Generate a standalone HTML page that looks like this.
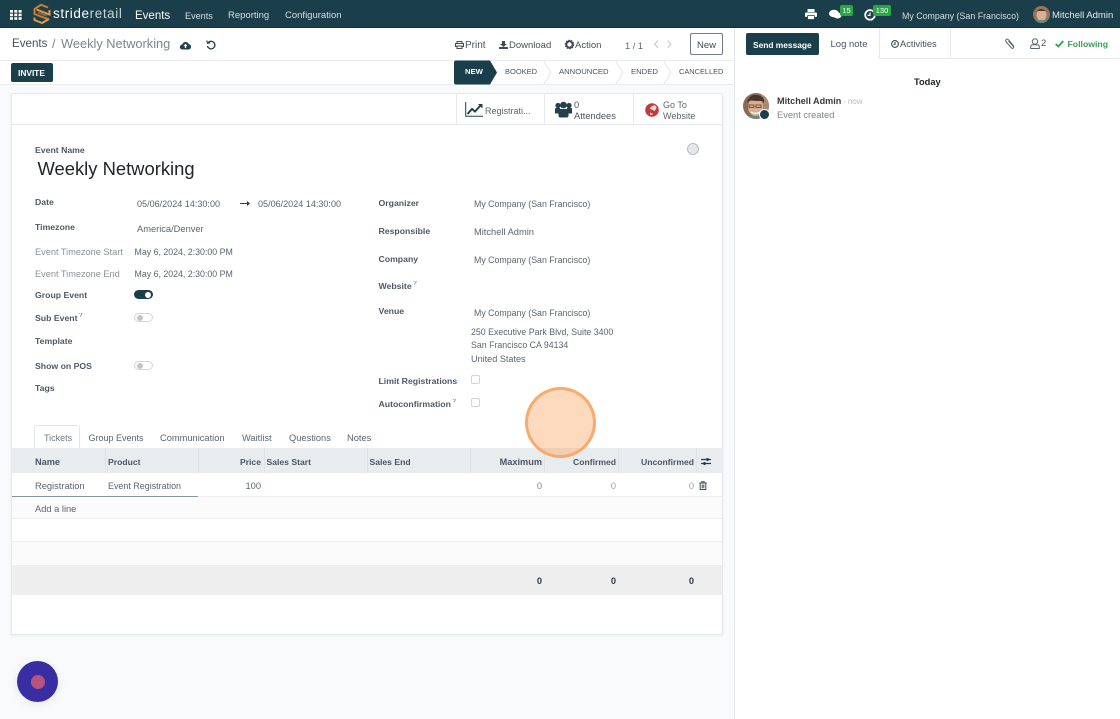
<!DOCTYPE html>
<html><head><meta charset="utf-8">
<style>
html,body{margin:0;padding:0;width:1120px;height:719px;overflow:hidden;background:#f9fafb;font-family:"Liberation Sans",sans-serif}
.a{position:absolute}
.t{position:absolute;white-space:nowrap;line-height:14px;font-size:9.6px;color:#4b5563}
.l{color:#374151;font-weight:bold;font-size:8.7px;opacity:.88}
.m{color:#8a9097;font-size:9.2px}
.v{color:#5b6570;font-size:8.8px}
.w{color:#fff}
.h{color:#374151;font-weight:bold;font-size:8.6px;opacity:.88}
.r{text-align:right}
sup{font-size:6px;color:#1b404c;line-height:0;font-weight:normal}
svg{position:absolute;overflow:visible}
.tog{position:absolute;left:134px;width:19px;height:9px;border-radius:5px;background:#fff;border:1px solid #d4d7da;box-sizing:border-box}
.tog i{position:absolute;left:2px;top:1px;width:6px;height:6px;border-radius:50%;background:#c4c6c9}
.cb{position:absolute;left:471px;width:9px;height:9px;border:1px solid #ced4da;border-radius:2px;background:#fff;box-sizing:border-box}
.vs{position:absolute;width:1px;background:#e0e3e6}
.hs{position:absolute;height:1px;background:#eceef0}
</style></head>
<body>
<!-- top bar -->
<div class="a" style="left:0;top:0;width:1120px;height:28px;background:#1a3f4b;border-bottom:1px solid #123039;box-sizing:border-box"></div>
<svg style="left:10px;top:10px" width="12" height="10" fill="#fff"><rect x="0" y="0" width="3" height="2.600"/><rect x="4.300" y="0" width="3" height="2.600"/><rect x="8.600" y="0" width="3" height="2.600"/><rect x="0" y="3.600" width="3" height="2.600"/><rect x="4.300" y="3.600" width="3" height="2.600"/><rect x="8.600" y="3.600" width="3" height="2.600"/><rect x="0" y="7.200" width="3" height="2.600"/><rect x="4.300" y="7.200" width="3" height="2.600"/><rect x="8.600" y="7.200" width="3" height="2.600"/></svg>
<svg style="left:33px;top:4px" width="18" height="20" fill="none" stroke="#d98a3d" stroke-width="2"><path d="M15 3.500 8 .8 1.500 5v5l13 5v-1.200" stroke="#c67f38"/><path d="M16.500 6v4.500L3.500 5.500M1.500 13.500v2.500L9 19l7-4" stroke="#e3994a"/><path d="M5 8.500l9 3.500" stroke="#8a6a40"/></svg>
<span class="t w" style="left:53px;top:6px;font-size:13.500px;line-height:16px;letter-spacing:.6px">stride<span style="font-weight:normal;color:#c9d3d6">retail</span></span>
<span class="t w" style="left:135px;top:8.500px;font-size:11.500px">Events</span>
<span class="t" style="left:185px;top:8.500px;color:#d7dfe1;font-size:9.100px">Events</span>
<span class="t" style="left:228px;top:8.500px;color:#d7dfe1;font-size:9.500px">Reporting</span>
<span class="t" style="left:285px;top:8.500px;color:#d7dfe1;font-size:9.500px">Configuration</span>
<svg style="left:805px;top:9px" width="12" height="11" fill="#fff"><rect x="2.500" y="0" width="7" height="3" rx=".5"/><rect x="0" y="3.500" width="12" height="4.500" rx="1"/><rect x="2.500" y="6.500" width="7" height="4" rx=".5" stroke="#1a3f4b" stroke-width=".8"/></svg>
<svg style="left:829px;top:9px" width="13" height="11" fill="#fff"><ellipse cx="5" cy="4.500" rx="5" ry="3.800"/><ellipse cx="8.500" cy="6.500" rx="4" ry="3"/></svg>
<div class="a" style="left:840px;top:5px;width:13px;height:11px;background:#28a745;border-radius:2px"></div>
<span class="t w" style="left:840px;top:3.500px;width:13px;text-align:center;font-size:7.500px">15</span>
<svg style="left:864px;top:9px" width="12" height="12" fill="none" stroke="#fff" stroke-width="1.800"><path d="M9.800 3A4.800 4.800 0 1 0 10.800 6"/><path d="M6 3.500V6.300H3.500" stroke-width="1.200"/></svg>
<div class="a" style="left:873px;top:5px;width:18px;height:11px;background:#28a745;border-radius:2px"></div>
<span class="t w" style="left:873px;top:3.500px;width:18px;text-align:center;font-size:7.500px">130</span>
<span class="t" style="left:902px;top:8.500px;color:#d7dfe1;font-size:8.850px">My Company (San Francisco)</span>
<svg style="left:1033px;top:6px" width="17" height="17"><defs><clipPath id="c1"><circle cx="8.500" cy="8.500" r="8.500"/></clipPath></defs><g clip-path="url(#c1)"><rect width="17" height="17" fill="#9a7459"/><ellipse cx="8.500" cy="9" rx="5" ry="6" fill="#d9b095"/><path d="M3 6Q8 0 14 6L12 5H5z" fill="#4a3528"/><rect x="3" y="14" width="11" height="4" fill="#6b8a7c"/></g></svg>
<span class="t" style="left:1052px;top:8.500px;color:#e5eaec;font-size:9.500px">Mitchell Admin</span>

<!-- control panel -->
<div class="a" style="left:0;top:28px;width:734px;height:56px;background:#fff"></div>
<div class="a" style="left:0;top:60px;width:734px;height:1px;background:#e9ecef"></div>
<div class="a" style="left:0;top:84px;width:734px;height:1px;background:#e9ecef"></div>
<span class="t" style="left:12px;top:36px;font-size:11.600px;line-height:16px;color:#495057">Events</span>
<span class="t" style="left:52px;top:36px;font-size:12.200px;line-height:16px;color:#7d858d">/</span>
<span class="t" style="left:61px;top:36px;font-size:12.800px;line-height:16px;color:#7d858d">Weekly Networking</span>
<svg style="left:180px;top:41px" width="11" height="9" fill="#23404b"><path d="M2.500 8.500a2.500 2.500 0 0 1-.3-5A3.500 3.500 0 0 1 8.700 3a2.800 2.800 0 0 1 0 5.500z"/><path d="M5.500 2.800 7.500 5H6.200v2H4.800V5H3.500z" fill="#fff"/></svg>
<svg style="left:206px;top:40px" width="10" height="10" fill="none" stroke="#23404b" stroke-width="1.300"><path d="M2 2.800A3.800 3.800 0 1 1 1.400 6"/><path d="M.8 .5 1.500 3.200 4.200 2.800" stroke-width="1.100"/></svg>

<svg style="left:455px;top:41px" width="9" height="8" fill="none" stroke="#3f4a55" stroke-width="1"><rect x="2" y=".5" width="5" height="2"/><rect x=".5" y="2.500" width="8" height="3"/><rect x="2" y="5" width="5" height="2.500" fill="#fff"/></svg>
<span class="t" style="left:465px;top:38.500px;color:#495057;font-size:10px">Print</span>
<svg style="left:499px;top:41px" width="9" height="8" fill="#3f4a55"><path d="M3 0h3v3h2L4.500 6 1 3h2z"/><rect x="0" y="6" width="9" height="2" rx=".5"/></svg>
<span class="t" style="left:509px;top:38.500px;color:#495057;font-size:9.500px">Download</span>
<svg style="left:565px;top:40px" width="9" height="9"><circle cx="4.500" cy="4.500" r="3.200" fill="none" stroke="#3f4a55" stroke-width="2"/><circle cx="4.500" cy="4.500" r="4.300" fill="none" stroke="#3f4a55" stroke-width="1" stroke-dasharray="1.500 1.200"/></svg>
<span class="t" style="left:575px;top:38.500px;color:#495057;font-size:9.500px">Action</span>
<span class="t" style="left:625px;top:38.500px;color:#5b6570;font-size:9.300px">1 / 1</span>
<svg style="left:652px;top:40px" width="24" height="9" fill="none" stroke="#d0d4d8" stroke-width="1.400"><path d="M6 .8 2.500 4.300 6 7.800M15.500 .8l3.500 3.500-3.500 3.500"/></svg>
<div class="a" style="left:690px;top:33px;width:33px;height:22px;border:1px solid #6f7f86;border-radius:2px;background:#fff;box-sizing:border-box"></div>
<span class="t" style="left:697px;top:38.500px;color:#3f4a55;font-size:9.500px">New</span>

<div class="a" style="left:11px;top:63px;width:42px;height:19px;background:#1a3f4b;border-radius:2px"></div>
<span class="t w" style="left:18px;top:66px;font-weight:bold;font-size:8.400px">INVITE</span>

<!-- status -->
<svg style="left:454px;top:60px" width="270" height="25" fill="none" stroke="#e3e6e8"><path d="M2 .5H36L43 12.500 36 24.500H2Q0 24.500 0 22.500V2.500Q0 .5 2 .5Z" fill="#1a3f4b" stroke="none"/><path d="M90 1 97 12.500 90 24M162 1 169 12.500 162 24M210 1 217 12.500 210 24"/></svg>
<span class="t w" style="left:465px;top:65px;font-weight:bold;font-size:7.700px">NEW</span>
<span class="t" style="left:505px;top:65px;font-size:7.500px;color:#4b5563">BOOKED</span>
<span class="t" style="left:559px;top:65px;font-size:7.700px;color:#4b5563">ANNOUNCED</span>
<span class="t" style="left:631px;top:65px;font-size:7.700px;color:#4b5563">ENDED</span>
<span class="t" style="left:679px;top:65px;font-size:7.400px;color:#4b5563">CANCELLED</span>

<!-- sheet -->
<div class="a" style="left:11px;top:93px;width:712px;height:542px;background:#fff;border:1px solid #e6e8ea;box-sizing:border-box;box-shadow:0 1px 3px rgba(0,0,0,.05)"></div>
<div class="hs" style="left:12px;top:124px;width:710px;background:#e6e8ea"></div>
<div class="vs" style="left:456px;top:94px;height:30px;background:#e6e8ea"></div>
<div class="vs" style="left:544px;top:94px;height:30px;background:#e6e8ea"></div>
<div class="vs" style="left:633px;top:94px;height:30px;background:#e6e8ea"></div>
<svg style="left:465px;top:102px" width="18" height="15" fill="none" stroke="#23404b"><path d="M.7 0V14.300H18" stroke-width="1"/><path d="M2.500 12 7 7l3 2.500L16 3" stroke-width="2"/><path d="M13 2h4.500v4.500z" fill="#23404b" stroke="none"/></svg>
<span class="t v" style="left:485px;top:103.500px;font-size:9px">Registrati...</span>
<svg style="left:555px;top:101px" width="17" height="17" fill="#23404b"><circle cx="3" cy="4.500" r="2.600"/><circle cx="14" cy="4.500" r="2.600"/><circle cx="8.500" cy="4" r="3.300"/><path d="M0 8q0-1 1-1h4v5.500H0zM12 7h4q1 0 1 1v4.500h-5z"/><path d="M3.500 8h10v6.500q0 2-2 2h-6q-2 0-2-2z"/></svg>
<span class="t" style="left:574px;top:97.500px;font-size:9.300px;color:#4b5563">0</span>
<span class="t" style="left:574px;top:109px;font-size:9.300px;color:#4b5563">Attendees</span>
<svg style="left:645px;top:103px" width="14" height="14"><circle cx="7" cy="7" r="6.800" fill="#c43a3a"/><path d="M7.500 3Q10 1 11.500 4 11.500 6 9.500 8 7.500 6.500 5 6 5.500 3.500 7.500 3zM5 9.500q2 .5 3 2-2 1-3-.2z" fill="#f5d8d8"/></svg>
<span class="t v" style="left:663px;top:97.500px;font-size:9px">Go To</span>
<span class="t v" style="left:663px;top:109px;font-size:9px">Website</span>

<!-- form -->
<span class="t l" style="left:35px;top:143px">Event Name</span>
<span class="t" style="left:37.500px;top:158px;font-size:18.400px;line-height:22px;color:#212529">Weekly Networking</span>
<div class="a" style="left:687px;top:143px;width:12px;height:12px;background:#e4e7ea;border:1px solid #b8bdc2;border-radius:50%;box-sizing:border-box"></div>

<span class="t l" style="left:35px;top:195px">Date</span>
<span class="t v" style="left:137px;top:197px;font-size:9.050px">05/06/2024 14:30:00</span>
<svg style="left:240px;top:200px" width="10" height="7" fill="#23404b"><path d="M0 3h7V1l3 2.500L7 6V4H0z"/></svg>
<span class="t v" style="left:258px;top:197px;font-size:9.050px">05/06/2024 14:30:00</span>
<span class="t l" style="left:35px;top:220px">Timezone</span>
<span class="t v" style="left:137px;top:222px;font-size:9.300px">America/Denver</span>
<span class="t m" style="left:35px;top:245px">Event Timezone Start</span>
<span class="t v" style="left:134.500px;top:245px">May 6, 2024, 2:30:00 PM</span>
<span class="t m" style="left:35px;top:267px">Event Timezone End</span>
<span class="t v" style="left:134.500px;top:267px">May 6, 2024, 2:30:00 PM</span>
<span class="t l" style="left:35px;top:288px">Group Event</span>
<div class="a" style="left:134px;top:290px;width:19px;height:9px;border-radius:5px;background:#1a3f4b"></div>
<div class="a" style="left:145px;top:291.500px;width:6px;height:6px;border-radius:50%;background:#fff"></div>
<span class="t l" style="left:35px;top:310.500px">Sub Event<sup> ?</sup></span>
<div class="tog" style="top:313px"><i></i></div>
<span class="t l" style="left:35px;top:334px">Template</span>
<span class="t l" style="left:35px;top:358.500px">Show on POS</span>
<div class="tog" style="top:361px"><i></i></div>
<span class="t l" style="left:35px;top:381px">Tags</span>

<span class="t l" style="left:378.500px;top:195.500px">Organizer</span>
<span class="t v" style="left:474px;top:197px">My Company (San Francisco)</span>
<span class="t l" style="left:378.500px;top:223.500px">Responsible</span>
<span class="t v" style="left:474px;top:225px;font-size:9.300px">Mitchell Admin</span>
<span class="t l" style="left:378.500px;top:251.500px">Company</span>
<span class="t v" style="left:474px;top:253px">My Company (San Francisco)</span>
<span class="t l" style="left:378.500px;top:279px">Website<sup> ?</sup></span>
<span class="t l" style="left:378.500px;top:304px">Venue</span>
<span class="t v" style="left:474px;top:306px">My Company (San Francisco)</span>
<span class="t v" style="left:471px;top:325px">250 Executive Park Blvd, Suite 3400</span>
<span class="t v" style="left:471px;top:338px">San Francisco CA 94134</span>
<span class="t v" style="left:471px;top:352px;font-size:9.100px">United States</span>
<span class="t l" style="left:378.500px;top:374px">Limit Registrations</span>
<div class="cb" style="top:375px"></div>
<span class="t l" style="left:378.500px;top:396.500px">Autoconfirmation<sup> ?</sup></span>
<div class="cb" style="top:398px"></div>

<!-- tabs -->
<div class="a" style="left:34px;top:425px;width:46px;height:24px;background:#fff;border:1px solid #e3e6e8;border-bottom:none;border-radius:3px 3px 0 0;box-sizing:border-box"></div>
<span class="t" style="left:44px;top:431px;color:#737b83;font-size:9px">Tickets</span>
<span class="t v" style="left:88.500px;top:431px;font-size:9px">Group Events</span>
<span class="t v" style="left:160px;top:431px;font-size:9.300px">Communication</span>
<span class="t v" style="left:242px;top:431px;font-size:9.300px">Waitlist</span>
<span class="t v" style="left:289px;top:431px;font-size:9.300px">Questions</span>
<span class="t v" style="left:347px;top:431px;font-size:9.300px">Notes</span>

<!-- table -->
<div class="a" style="left:12px;top:448px;width:710px;height:25px;background:#e9ecef"></div>
<div class="vs" style="left:105px;top:448px;height:25px"></div>
<div class="vs" style="left:198px;top:448px;height:25px"></div>
<div class="vs" style="left:264px;top:448px;height:25px"></div>
<div class="vs" style="left:367px;top:448px;height:25px"></div>
<div class="vs" style="left:470px;top:448px;height:25px"></div>
<div class="vs" style="left:544px;top:448px;height:25px"></div>
<div class="vs" style="left:618px;top:448px;height:25px"></div>
<div class="vs" style="left:696px;top:448px;height:25px"></div>
<span class="t h" style="left:35px;top:455px;font-size:9.200px">Name</span>
<span class="t h" style="left:108px;top:455px">Product</span>
<span class="t h r" style="left:220px;top:455px;width:41px">Price</span>
<span class="t h" style="left:266.500px;top:455px">Sales Start</span>
<span class="t h" style="left:369.500px;top:455px">Sales End</span>
<span class="t h r" style="left:480px;top:455px;width:62px;font-size:9.200px">Maximum</span>
<span class="t h r" style="left:554px;top:455px;width:62px">Confirmed</span>
<span class="t h r" style="left:624px;top:455px;width:70px">Unconfirmed</span>
<svg style="left:701px;top:457px" width="10" height="9" fill="none" stroke="#23404b" stroke-width="1.200"><path d="M0 2.500h10M0 6.500h10"/><rect x="5.500" y="1" width="2" height="3" fill="#23404b" stroke="none"/><rect x="2.500" y="5" width="2" height="3" fill="#23404b" stroke="none"/></svg>

<span class="t v" style="left:35px;top:479px;font-size:9.300px">Registration</span>
<span class="t v" style="left:108px;top:479px;font-size:8.950px">Event Registration</span>
<span class="t v r" style="left:220px;top:479px;width:41px;font-size:9.300px">100</span>
<span class="t r" style="left:500px;top:479px;width:42px;font-size:9.300px;color:#7d858d">0</span>
<span class="t r" style="left:574px;top:479px;width:42px;font-size:9.300px;color:#9aa0a6">0</span>
<span class="t r" style="left:652px;top:479px;width:42px;font-size:9.300px;color:#9aa0a6">0</span>
<svg style="left:699px;top:481px" width="8" height="9" fill="none" stroke="#3f4a55" stroke-width="1"><path d="M.3 2h7.400M2.800 2V.7h2.400V2M1.200 2.300V8.500h5.600V2.300M3.200 3.500v3.800M4.800 3.500v3.800"/></svg>
<div class="a" style="left:12px;top:496px;width:710px;height:1px;background:#eceef0"></div>
<div class="a" style="left:12px;top:496px;width:186px;height:1px;background:#7f9a9c"></div>
<div class="a" style="left:12px;top:497px;width:710px;height:21px;background:#fbfbfb"></div>
<span class="t v" style="left:35px;top:501.500px;font-size:9.300px">Add a line</span>
<div class="hs" style="left:12px;top:518px;width:710px"></div>
<div class="hs" style="left:12px;top:541px;width:710px"></div>
<div class="a" style="left:12px;top:542px;width:710px;height:22px;background:#fbfbfb"></div>
<div class="a" style="left:12px;top:564.500px;width:710px;height:30.500px;background:#eeeeee"></div>
<span class="t r" style="left:500px;top:574px;width:42px;font-weight:bold;font-size:9.300px;color:#2f3a44">0</span>
<span class="t r" style="left:574px;top:574px;width:42px;font-weight:bold;font-size:9.300px;color:#2f3a44">0</span>
<span class="t r" style="left:652px;top:574px;width:42px;font-weight:bold;font-size:9.300px;color:#2f3a44">0</span>

<!-- chatter -->
<div class="a" style="left:734px;top:28px;width:386px;height:691px;background:#fff;border-left:1px solid #e3e6e8;box-sizing:border-box"></div>
<div class="a" style="left:746px;top:33px;width:73px;height:21.500px;background:#1a3f4b;border-radius:2px"></div>
<span class="t w" style="left:753px;top:37.500px;font-weight:bold;font-size:8.400px">Send message</span>
<span class="t" style="left:830.500px;top:38px;font-size:9.500px;color:#4b5563">Log note</span>
<div class="a" style="left:879px;top:28px;width:72px;height:31px;border-left:1px solid #e6e8ea;border-right:1px solid #e6e8ea;box-sizing:border-box"></div>
<div class="a" style="left:879px;top:58px;width:241px;height:1px;background:#e6e8ea"></div>
<svg style="left:890.500px;top:40px" width="8" height="8" fill="none" stroke="#3f4a55" stroke-width="1.100"><circle cx="4" cy="4" r="3.400"/><path d="M4 2v2.300H2.500"/></svg>
<span class="t" style="left:900px;top:37px;font-size:9.300px;color:#495057">Activities</span>
<svg style="left:1005px;top:38px" width="10" height="11" fill="none" stroke="#5b6570" stroke-width="1"><path d="M9 8.500 3.500 1.800Q2.300.6 1.200 1.600T1.200 4L6.500 10Q7.500 10.800 8.300 10T8 8L3.500 3"/></svg>
<svg style="left:1030px;top:38px" width="10" height="11" fill="none" stroke="#5b6570" stroke-width="1"><circle cx="5" cy="3.500" r="2.700"/><path d="M.7 10.500V9Q.7 6.800 3 6.800H7Q9.300 6.800 9.300 9v1.500z"/></svg>
<span class="t" style="left:1041px;top:37px;font-size:9.500px;color:#4b5563">2</span>
<svg style="left:1055px;top:40px" width="9" height="8" fill="none" stroke="#28a745" stroke-width="1.800"><path d="M.7 4 3.300 6.500 8.300 1"/></svg>
<span class="t" style="left:1067.500px;top:37px;font-size:8.700px;color:#3f9a58;font-weight:bold">Following</span>
<span class="t" style="left:914px;top:74.500px;font-weight:bold;font-size:9.300px;color:#212529">Today</span>
<svg style="left:743px;top:93px" width="26" height="26"><defs><clipPath id="c2"><circle cx="13" cy="13" r="13"/></clipPath></defs><g clip-path="url(#c2)"><rect width="26" height="26" fill="#8a6a52"/><rect x="18" width="8" height="26" fill="#a88a6e"/><ellipse cx="12.500" cy="14" rx="7.500" ry="9" fill="#d8ad90"/><path d="M4 10Q6 1 14 2T21 10L19 8Q13 8 7 7.500Z" fill="#4a3528"/><path d="M6 12h5v2.500H6zM13 12h5v2.500h-5z" fill="none" stroke="#4a3a30" stroke-width=".8"/><path d="M8 19q4.500 3 9 0" stroke="#fff" stroke-width="1.300" fill="none"/><rect x="3" y="23" width="20" height="4" fill="#6e8a80"/></g></svg>
<div class="a" style="left:759px;top:109px;width:9px;height:9px;border-radius:50%;background:#1a3f4b;border:1px solid #fff"></div>
<span class="t" style="left:777px;top:94px;font-weight:bold;font-size:9.100px;color:#212529;opacity:.9">Mitchell Admin</span>
<span class="t" style="left:843px;top:95px;font-size:8px;color:#b8bcc0">- now</span>
<span class="t" style="left:777px;top:108px;font-size:9.300px;color:#7d858d">Event created</span>

<!-- overlays -->
<div class="a" style="left:524.500px;top:387px;width:71px;height:71px;border-radius:50%;background:rgba(251,164,100,.42);border:3px solid rgba(247,165,100,.9);box-sizing:border-box"></div>
<div class="a" style="left:17px;top:661px;width:41px;height:41px;border-radius:50%;background:#3a2da3;box-shadow:0 2px 10px rgba(0,0,0,.08)"></div>
<div class="a" style="left:30.500px;top:674.500px;width:14px;height:14px;border-radius:50%;background:#b5547f"></div>
</body></html>
